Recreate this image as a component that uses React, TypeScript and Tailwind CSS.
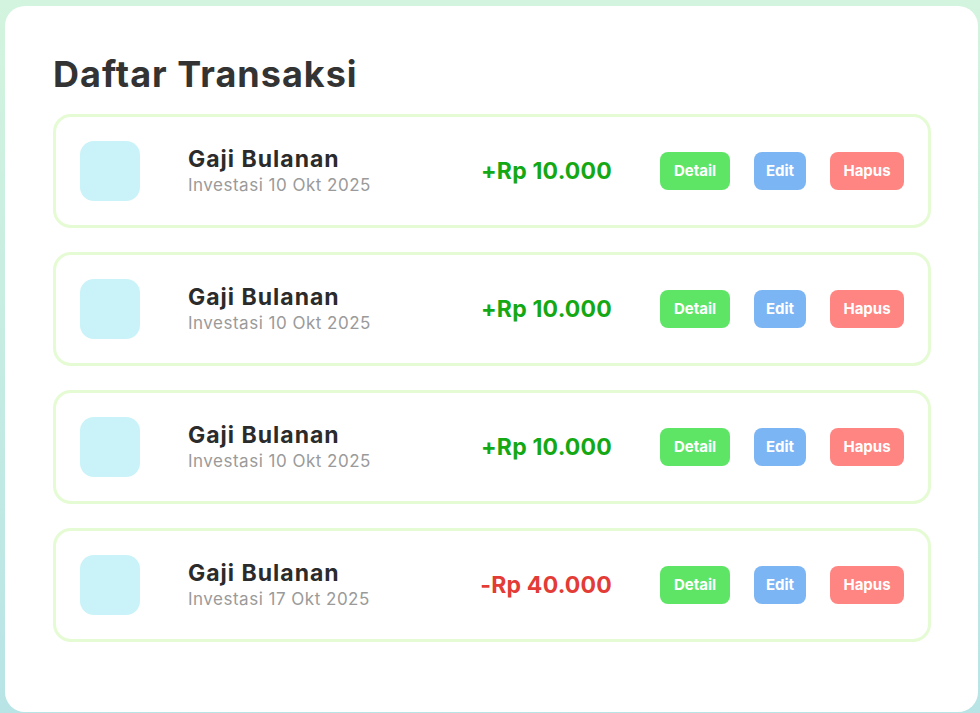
import React from "react";

type Tx = { name: string; sub: string; amount: string; positive: boolean };

const items: Tx[] = [
  { name: "Gaji Bulanan", sub: "Investasi 10 Okt 2025", amount: "+Rp 10.000", positive: true },
  { name: "Gaji Bulanan", sub: "Investasi 10 Okt 2025", amount: "+Rp 10.000", positive: true },
  { name: "Gaji Bulanan", sub: "Investasi 10 Okt 2025", amount: "+Rp 10.000", positive: true },
  { name: "Gaji Bulanan", sub: "Investasi 17 Okt 2025", amount: "-Rp 40.000", positive: false },
];

export default function App() {
  return (
    <div
      className="h-[713px] w-[980px] overflow-hidden bg-gradient-to-b from-[#d3f4de] to-[#b8e4e6] pl-[5px] pt-[6px]"
      style={{ fontFamily: "Inter, 'Noto Sans', sans-serif" }}
    >
      <div className="h-[706px] w-[973px] rounded-[20px] bg-white pl-[48px] pr-[47px] pt-[46px]">
        <h1 className="mb-[18px] text-[36px] font-bold leading-[44px] tracking-[1px] text-[#333333]">
          Daftar Transaksi
        </h1>
        <div className="flex flex-col gap-6">
          {items.map((t, i) => (
            <div
              key={i}
              className="flex items-center rounded-[18px] border-[3px] border-[#e5fbd3] p-6"
            >
              <div className="h-[60px] w-[60px] shrink-0 rounded-[14px] bg-[#c9f3f8]" />
              <div className="ml-12 flex flex-1 flex-col">
                <div className="text-[23px] font-bold leading-[28px] tracking-[1px] text-[#2b2b2b]">
                  {t.name}
                </div>
                <div className="text-[17px] leading-[24px] tracking-[0.5px] text-[#9a9a9a]">{t.sub}</div>
              </div>
              <div
                className={`text-[23px] font-bold tracking-[0.2px] ${
                  t.positive ? "text-[#14a814]" : "text-[#e33b35]"
                }`}
              >
                {t.amount}
              </div>
              <div className="ml-12 flex gap-6">
                <button className="h-[38px] w-[70px] rounded-[8px] bg-[#5ee566] text-[15px] font-bold text-white">
                  Detail
                </button>
                <button className="h-[38px] w-[52px] rounded-[8px] bg-[#7cb5f4] text-[15px] font-bold text-white">
                  Edit
                </button>
                <button className="h-[38px] w-[74px] rounded-[8px] bg-[#ff8582] text-[15px] font-bold text-white">
                  Hapus
                </button>
              </div>
            </div>
          ))}
        </div>
      </div>
    </div>
  );
}
